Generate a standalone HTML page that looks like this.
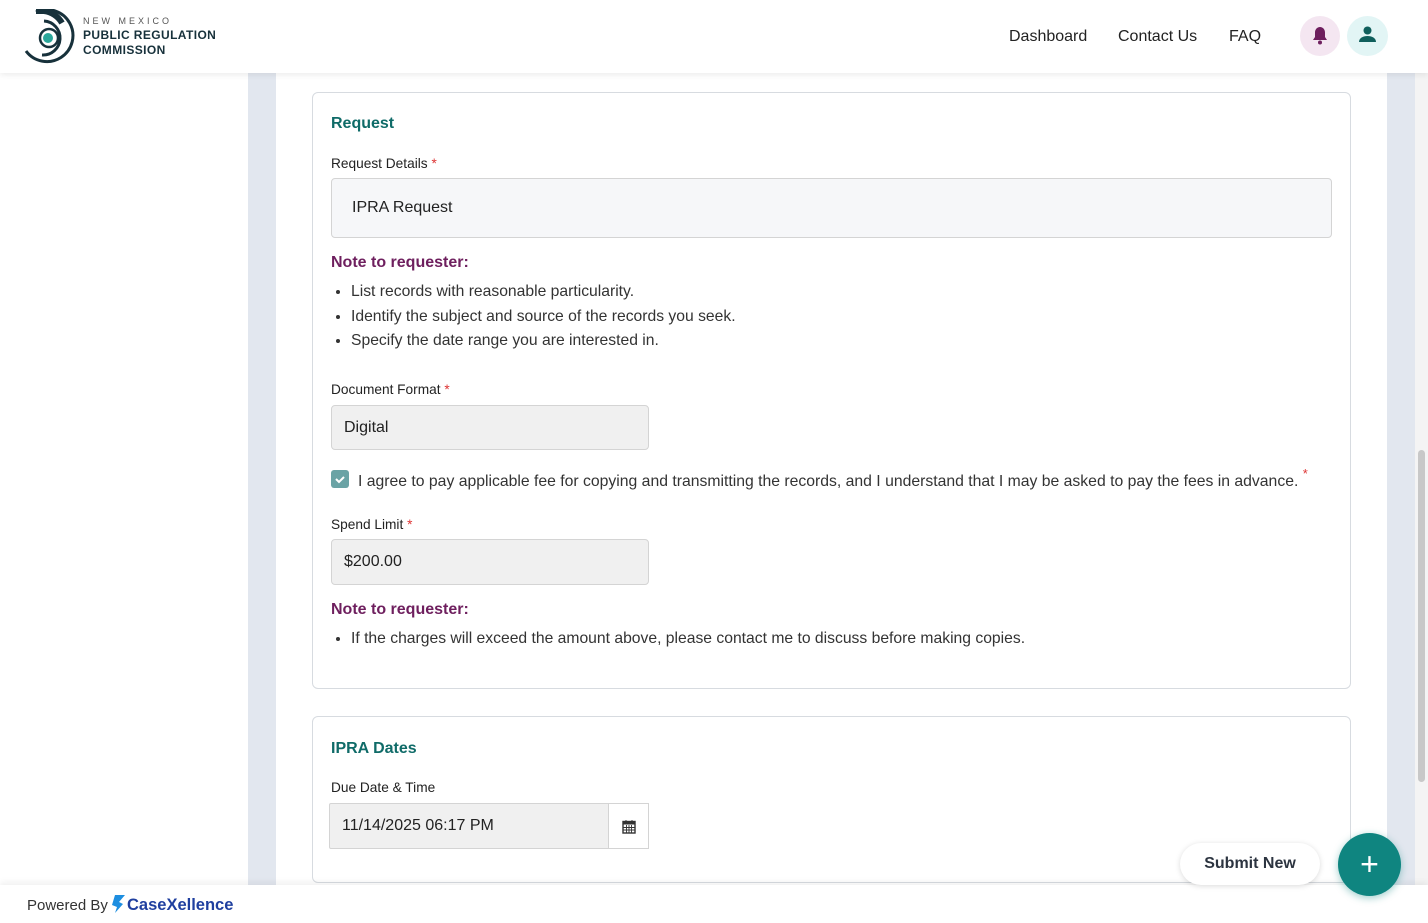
<!DOCTYPE html>
<html><head><meta charset="utf-8"><style>
*{box-sizing:border-box;margin:0;padding:0}
body{width:1428px;height:923px;overflow:hidden;font-family:"Liberation Sans",sans-serif;background:#fff;position:relative;color:#222}
.hdr{position:absolute;left:0;top:0;width:1428px;height:73px;background:#fff;box-shadow:0 2px 6px rgba(0,0,0,.08);z-index:5}
.g1{position:absolute;left:248px;top:73px;width:28px;height:812px;background:#e2e7ef}
.g2{position:absolute;left:1387px;top:73px;width:28px;height:812px;background:#e2e7ef}
.sb{position:absolute;left:1415px;top:73px;width:13px;height:850px;background:#f4f4f4}
.thumb{position:absolute;left:1418px;top:450px;width:7px;height:332px;background:#c8c8c8;border-radius:4px}
.card{position:absolute;left:312px;width:1039px;border:1px solid #d7dbe0;border-radius:6px;background:#fff}
h3{position:absolute;left:18px;font-size:16px;font-weight:bold;color:#0f6b68}
.lbl{position:absolute;left:18px;font-size:13.7px;color:#222}
.lbl b{color:#d33;font-weight:normal}
.note{position:absolute;left:18px;font-size:16px;font-weight:bold;color:#6e1f5e}
ul{position:absolute;left:38px;font-size:15.7px;color:#333;line-height:24.5px}
.in{position:absolute;border:1px solid #d4d4d4;border-radius:4px;font-size:16px;color:#222;padding-left:12px;display:flex;align-items:center}
.nav{position:absolute;top:28px;font-size:16px;color:#222}
.foot{position:absolute;left:0;top:885px;width:1428px;height:38px;background:#fff;box-shadow:0 -3px 6px rgba(0,0,0,.06);z-index:4}
</style></head><body>
<div class="hdr">
<svg style="position:absolute;left:22px;top:9px" width="54" height="56" viewBox="0 0 54 56">
<path d="M14 3 A26 26 0 1 1 4 42" fill="none" stroke="#17313b" stroke-width="3"/>
<path d="M14 2 L22 2 A24 24 0 0 1 40 14" fill="none" stroke="#17313b" stroke-width="6"/>
<path d="M22 12 A17 17 0 1 1 20 46" fill="none" stroke="#17313b" stroke-width="3"/>
<circle cx="27" cy="29" r="9" fill="none" stroke="#17313b" stroke-width="2.5"/>
<circle cx="26" cy="29" r="5" fill="#2ba79b"/>
</svg>
<div style="position:absolute;left:83px;top:16px;font-size:9px;letter-spacing:3px;color:#555">NEW MEXICO</div>
<div style="position:absolute;left:83px;top:28px;font-size:12px;font-weight:bold;color:#17313b;line-height:15px;letter-spacing:.4px">PUBLIC REGULATION<br>COMMISSION</div>
<div class="nav" style="left:1009px">Dashboard</div>
<div class="nav" style="left:1118px">Contact Us</div>
<div class="nav" style="left:1229px">FAQ</div>
<div style="position:absolute;left:1300px;top:16px;width:40px;height:40px;border-radius:50%;background:#f4e6f1"></div>
<svg style="position:absolute;left:1311px;top:26px" width="18" height="19" viewBox="0 0 18 19"><path d="M9 1c-3 0-5 2.5-5 5.5V11L2 14h14l-2-3V6.5C14 3.5 12 1 9 1z" fill="#6e1f5e"/><circle cx="9" cy="16.5" r="2" fill="#6e1f5e"/></svg>
<div style="position:absolute;left:1347px;top:16px;width:41px;height:40px;border-radius:50%;background:#e2f5f5"></div>
<svg style="position:absolute;left:1358px;top:25px" width="19" height="19" viewBox="0 0 19 19"><circle cx="9.5" cy="5.5" r="4" fill="#0f5f5c"/><path d="M1 17c0-4 4-6 8.5-6s8.5 2 8.5 6z" fill="#0f5f5c"/></svg>
</div>
<div class="g1"></div><div class="g2"></div><div class="sb"></div><div class="thumb"></div>
<div class="card" style="top:92px;height:597px">
<h3 style="top:22px">Request</h3>
<div class="lbl" style="top:63px">Request Details <b>*</b></div>
<div class="in" style="left:18px;top:85px;width:1001px;height:60px;background:#f6f7f9;padding-left:20px">IPRA Request</div>
<div class="note" style="top:161px">Note to requester:</div>
<ul style="top:187px"><li>List records with reasonable particularity.</li><li>Identify the subject and source of the records you seek.</li><li>Specify the date range you are interested in.</li></ul>
<div class="lbl" style="top:289px">Document Format <b>*</b></div>
<div class="in" style="left:18px;top:312px;width:318px;height:45px;background:#f0f0f0">Digital</div>
<div style="position:absolute;left:18px;top:377px;width:18px;height:18px;border-radius:3px;background:#6aa3a5"><svg width="18" height="18"><path d="M5 9l3 3 5-5" stroke="#fff" stroke-width="2" fill="none"/></svg></div>
<div style="position:absolute;left:45px;top:380px;font-size:15.75px;color:#333">I agree to pay applicable fee for copying and transmitting the records, and I understand that I may be asked to pay the fees in advance. <span style="color:#d33;font-size:13px;position:relative;top:-8px">*</span></div>
<div class="lbl" style="top:424px">Spend Limit <b>*</b></div>
<div class="in" style="left:18px;top:446px;width:318px;height:46px;background:#f0f0f0">$200.00</div>
<div class="note" style="top:508px">Note to requester:</div>
<ul style="top:534px"><li>If the charges will exceed the amount above, please contact me to discuss before making copies.</li></ul>
</div>
<div class="card" style="top:716px;height:167px">
<h3 style="top:23px">IPRA Dates</h3>
<div class="lbl" style="top:63px">Due Date &amp; Time</div>
<div class="in" style="left:16px;top:86px;width:280px;height:46px;background:#f0f0f0;border-radius:2px 0 0 2px">11/14/2025 06:17 PM</div>
<div style="position:absolute;left:295px;top:86px;width:41px;height:46px;border:1px solid #d4d4d4;display:flex;align-items:center;justify-content:center"><svg width="14" height="15" viewBox="0 0 14 15"><rect x="1" y="2.5" width="12" height="11.5" fill="none" stroke="#333" stroke-width="1.4"/><rect x="1" y="2.5" width="12" height="3" fill="#333"/><path d="M4 1v3M10 1v3M1 8.5h12M1 11h12M4.5 6v8M7 6v8M9.5 6v8" stroke="#333" stroke-width=".9"/></svg></div>
</div>
<div class="foot"><div style="position:absolute;left:27px;top:12px;font-size:15px;color:#333">Powered By</div>
<svg style="position:absolute;left:111px;top:10px" width="14" height="18" viewBox="0 0 14 18"><path d="M4 0h10L8 7l4 2-8 9 2-6-5-2z" fill="#1d8ee0"/></svg>
<div style="position:absolute;left:127px;top:11px;font-size:16.5px;font-weight:bold;color:#1f3f9f">CaseXellence</div></div>
<div style="position:absolute;left:1180px;top:843px;width:140px;height:42px;border-radius:21px;background:#fff;box-shadow:0 1px 6px rgba(0,0,0,.15);font-size:16px;font-weight:bold;color:#2c3440;display:flex;align-items:center;justify-content:center;z-index:6">Submit New</div>
<div style="position:absolute;left:1338px;top:833px;width:63px;height:63px;border-radius:50%;background:#0f8580;box-shadow:0 2px 8px rgba(15,133,128,.4);z-index:6;color:#fff;font-size:32px;display:flex;align-items:center;justify-content:center">+</div>
</body></html>
